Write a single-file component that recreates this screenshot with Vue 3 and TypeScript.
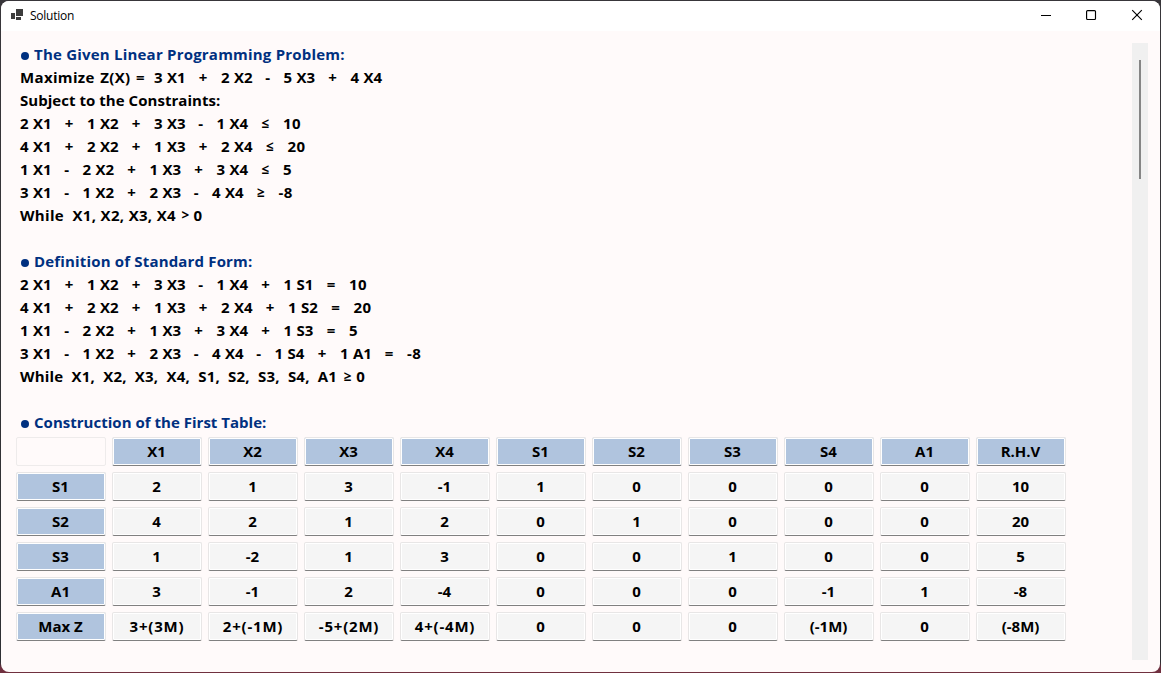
<script setup lang="ts">
interface Line {
  kind: 'heading' | 'label' | 'equation' | 'blank'
  text?: string
  cls?: string
  prefix?: string
  relation?: string
}

const lines: Line[] = [
  { kind: 'heading', text: 'The Given Linear Programming Problem:', cls: 'h-given' },
  { kind: 'equation', prefix: 'Maximize Z(X) =', text: '3 X1|+|2 X2|-|5 X3|+|4 X4' },
  { kind: 'label', text: 'Subject to the Constraints:', cls: 'l-subject' },
  { kind: 'equation', text: '2 X1|+|1 X2|+|3 X3|-|1 X4|≤|10' },
  { kind: 'equation', text: '4 X1|+|2 X2|+|1 X3|+|2 X4|≤|20' },
  { kind: 'equation', text: '1 X1|-|2 X2|+|1 X3|+|3 X4|≤|5' },
  { kind: 'equation', text: '3 X1|-|1 X2|+|2 X3|-|4 X4|≥|-8' },
  { kind: 'label', text: 'While  X1, X2, X3, X4', relation: '>', cls: 'l-while' },
  { kind: 'blank' },
  { kind: 'heading', text: 'Definition of Standard Form:', cls: 'h-form' },
  { kind: 'equation', text: '2 X1|+|1 X2|+|3 X3|-|1 X4|+|1 S1|=|10' },
  { kind: 'equation', text: '4 X1|+|2 X2|+|1 X3|+|2 X4|+|1 S2|=|20' },
  { kind: 'equation', text: '1 X1|-|2 X2|+|1 X3|+|3 X4|+|1 S3|=|5' },
  { kind: 'equation', text: '3 X1|-|1 X2|+|2 X3|-|4 X4|-|1 S4|+|1 A1|=|-8' },
  { kind: 'label', text: 'While  X1,  X2,  X3,  X4,  S1,  S2,  S3,  S4,  A1', relation: '≥', cls: 'l-while-all' },
  { kind: 'blank' },
  { kind: 'heading', text: 'Construction of the First Table:', cls: 'h-table' },
]

const tokens = (text = ''): string[] => text.split('|')

function tokenClass(token: string): string {
  if (token === '-') return 'op minus'
  if (token === '+' || token === '=') return 'op'
  if (token === '≤' || token === '≥') return 'op compare'
  if (token.includes('S')) return 'term slack'
  if (token.includes('X') || token.includes('A')) return 'term'
  return 'value'
}

const rows: string[][] = [
  ['', 'X1', 'X2', 'X3', 'X4', 'S1', 'S2', 'S3', 'S4', 'A1', 'R.H.V'],
  ['S1', '2', '1', '3', '-1', '1', '0', '0', '0', '0', '10'],
  ['S2', '4', '2', '1', '2', '0', '1', '0', '0', '0', '20'],
  ['S3', '1', '-2', '1', '3', '0', '0', '1', '0', '0', '5'],
  ['A1', '3', '-1', '2', '-4', '0', '0', '0', '-1', '1', '-8'],
  ['Max Z', '3+(3M)', '2+(-1M)', '-5+(2M)', '4+(-4M)', '0', '0', '0', '(-1M)', '0', '(-8M)'],
]
</script>

<template>
  <div class="desktop">
    <div class="window">
      <header class="titlebar">
        <svg class="app-icon" width="13" height="12" viewBox="0 0 13 12" shape-rendering="crispEdges">
          <path fill="#3c3c3c" d="M5 0h7v7H5zM0 4h4v6H0zM5 8h5v3H5z" />
        </svg>
        <span class="title">Solution</span>
        <div class="controls">
          <svg width="46" height="30" viewBox="0 0 46 30"><path d="M17 14.5h10" stroke="#000" fill="none" /></svg>
          <svg width="46" height="30" viewBox="0 0 46 30"><rect x="16.6" y="9.6" width="8.9" height="8.9" rx="1" stroke="#000" stroke-width="1.15" fill="none" /></svg>
          <svg width="46" height="30" viewBox="0 0 46 30"><path d="M16.2 9.2l9.6 9.6M25.8 9.2l-9.6 9.6" stroke="#000" stroke-width="1.15" fill="none" /></svg>
        </div>
      </header>
      <main class="body">
        <div class="content">
          <div v-for="(line, i) in lines" :key="i" class="line" :class="line.kind">
            <template v-if="line.kind === 'heading'">
              <i class="bullet"></i><span :class="line.cls">{{ line.text }}</span>
            </template>
            <template v-else-if="line.kind === 'label'">
              <span :class="line.cls">{{ line.text }}</span>
              <template v-if="line.relation">
                <span class="relation">{{ line.relation }}</span><span>0</span>
              </template>
            </template>
            <template v-else-if="line.kind === 'equation'">
              <span v-if="line.prefix" class="prefix">{{ line.prefix }}</span>
              <span v-for="(t, j) in tokens(line.text)" :key="j" :class="tokenClass(t)">{{ t }}</span>
            </template>
          </div>
          <div class="grid">
            <template v-for="(row, r) in rows" :key="r">
              <div
                v-for="(cell, c) in row"
                :key="c"
                class="cell"
                :class="{ head: r === 0 || c === 0, empty: r === 0 && c === 0, sum: cell.includes('+') }"
              >{{ cell }}</div>
            </template>
          </div>
        </div>
        <div class="scrollbar"><div class="thumb"></div></div>
      </main>
    </div>
  </div>
</template>

<style>
html, body { margin: 0; overflow: hidden; }
</style>

<style scoped>
.desktop {
  width: 1161px;
  height: 673px;
  box-sizing: border-box;
  padding: 1px;
  background: linear-gradient(#38363a 0, #2e2f33 662px, #70303f 668px);
}
.window {
  height: 671px;
  border-radius: 8px;
  overflow: hidden;
  background: #fffafa;
  display: flex;
  flex-direction: column;
}
.titlebar {
  height: 30px;
  flex: none;
  background: #fff;
  display: flex;
  align-items: center;
  font: 12px/30px "Open Sans", "Noto Sans", sans-serif;
  color: #000;
}
.app-icon { margin: 0 0 2px 10px; }
.title { margin-left: 6px; letter-spacing: -0.25px; }
.controls { margin-left: auto; display: flex; margin-right: -2px; }
.body { flex: 1; display: flex; justify-content: space-between; }
.content { padding: 12px 0 0 15px; }
.line {
  height: 23px;
  display: flex;
  align-items: center;
  padding-left: 4px;
  font: 700 15px/23px "Open Sans", "Noto Sans", sans-serif;
  color: #000;
  white-space: pre;
}
.heading { color: #003080; }
.bullet { width: 8px; height: 8px; border-radius: 50%; background: #003080; margin: 2px 5px 0 1px; }
.h-given { letter-spacing: 0.21px; }
.h-form { letter-spacing: 0.17px; }
.h-table { letter-spacing: 0.02px; }
.l-subject { letter-spacing: 0.04px; }
.l-while { letter-spacing: 0.33px; }
.l-while-all { letter-spacing: 0.2px; }
.relation { width: 17px; text-align: center; font-size: 13.5px; padding-left: 1px; margin-right: -0.5px; }
.l-while-all + .relation { padding-left: 2px; margin-right: 0; }
.prefix { width: 134px; letter-spacing: 0.35px; word-spacing: 1.2px; }
.term { width: 32px; word-spacing: 0.5px; }
.slack { width: 30.5px; }
.op { width: 35px; text-align: center; text-indent: -1px; }
.minus { width: 30.5px; }
.compare { width: 34.5px; font-size: 13.5px; text-indent: -1px; }
.value { letter-spacing: 0.3px; }
.grid {
  margin-top: 3px;
  display: grid;
  grid-template-columns: repeat(11, 90px);
  grid-auto-rows: 29px;
  gap: 6px;
}
.cell {
  box-sizing: border-box;
  padding-right: 1px;
  border: 1px solid #e8e6e6;
  border-bottom-color: #808080;
  border-radius: 2px;
  box-shadow: inset 0 0 0 1px #fff;
  background: #f5f5f5;
  text-align: center;
  font: 700 15px/27px "Open Sans", "Noto Sans", sans-serif;
  color: #000;
}
.cell.head { background: #b0c4de; }
.cell.empty { background: #fffafa; border-color: #eeebeb; box-shadow: none; }
.cell.sum { letter-spacing: 0.8px; padding-right: 0; }
.scrollbar { display: flow-root; width: 16px; height: 617px; margin: 12px 12px 0 0; background: #f0f0f0; }
.thumb { width: 2px; height: 119px; margin: 17px 0 0 7px; background: #858585; }
</style>
